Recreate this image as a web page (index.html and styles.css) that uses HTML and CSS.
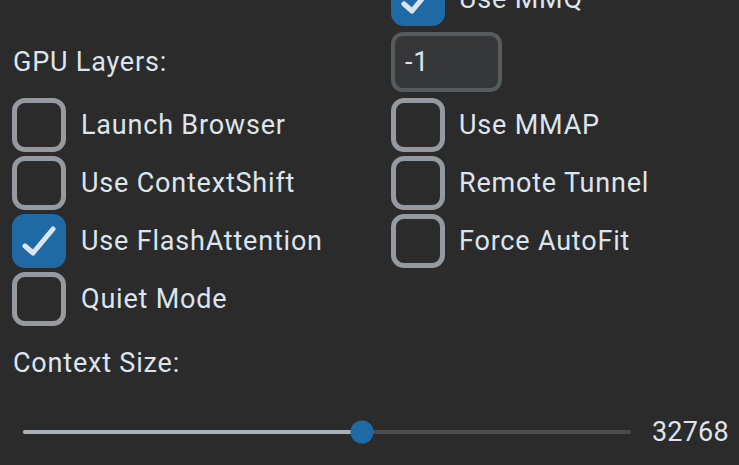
FILE: index.html
```html
<!DOCTYPE html>
<html lang="en">
<head>
    <meta charset="UTF-8">
    <meta name="viewport" content="width=device-width, initial-scale=1.0">
    <title>Hardware Settings</title>
    <link rel="stylesheet" href="styles.css">
</head>
<body>
    <div class="panel">
        <div class="grid">
            <div></div>
            <label class="check">
                <span class="box on">
                    <svg viewBox="0 0 54 54"><path d="M13 32 L21 39 L41 15"/></svg>
                </span>
                <span>Use MMQ</span>
            </label>

            <div class="label">GPU Layers:</div>
            <div class="entry">-1</div>

            <label class="check"><span class="box"></span><span>Launch Browser</span></label>
            <label class="check"><span class="box"></span><span>Use MMAP</span></label>

            <label class="check"><span class="box"></span><span>Use ContextShift</span></label>
            <label class="check"><span class="box"></span><span>Remote Tunnel</span></label>

            <label class="check">
                <span class="box on">
                    <svg viewBox="0 0 54 54"><path d="M13 32 L21 39 L41 15"/></svg>
                </span>
                <span>Use FlashAttention</span>
            </label>
            <label class="check"><span class="box"></span><span>Force AutoFit</span></label>

            <label class="check"><span class="box"></span><span>Quiet Mode</span></label>
        </div>

        <div class="label ctx-label">Context Size:</div>
        <div class="slider-row">
            <div class="slider">
                <div class="fill" style="width: 55.8%"></div>
                <div class="thumb" style="left: 55.8%"></div>
            </div>
            <div class="value">32768</div>
        </div>
    </div>
</body>
</html>
```

FILE: styles.css
```css
body {
    margin: 0;
    background-color: #2b2b2b;
    color: #dce4ee;
    font-family: Roboto, "Noto Sans", sans-serif;
    font-size: 27px;
    letter-spacing: 0.8px;
    overflow: hidden;
}
.panel {
    margin-top: -28px;
    padding-left: 12px;
}
.grid {
    display: grid;
    grid-template-columns: 379px auto;
    row-gap: 4px;
    align-items: center;
}
.label {
    line-height: 30px;
    padding-left: 1px;
}
.check {
    display: flex;
    align-items: center;
    gap: 14px;
    height: 54px;
}
.grid > .check:nth-child(odd) {
    gap: 15px;
}
.box {
    width: 54px;
    height: 54px;
    box-sizing: border-box;
    border: 5px solid #949a9f;
    border-radius: 13px;
    flex-shrink: 0;
    display: flex;
}
.box.on {
    background-color: #1f6aa5;
    border-color: #1f6aa5;
}
.box svg {
    width: 54px;
    height: 54px;
    margin: -5px;
}
.box svg path {
    fill: none;
    stroke: #dce4ee;
    stroke-width: 5;
    stroke-linecap: round;
    stroke-linejoin: round;
}
.entry {
    width: 111px;
    height: 60px;
    margin: 2px 0;
    box-sizing: border-box;
    border: 4px solid #565b5e;
    border-radius: 12px;
    background-color: #343638;
    padding-left: 10px;
    display: flex;
    align-items: center;
}
.ctx-label {
    margin-top: 22px;
}
.slider-row {
    display: flex;
    align-items: center;
    margin-top: 39px;
    padding-left: 11px;
    gap: 21px;
}
.slider {
    position: relative;
    width: 608px;
    height: 4px;
    border-radius: 2px;
    background-color: #4a4d50;
}
.fill {
    height: 4px;
    border-radius: 2px;
    background-color: #aab0b5;
}
.thumb {
    position: absolute;
    top: 50%;
    width: 23px;
    height: 23px;
    border-radius: 50%;
    background-color: #1f6aa5;
    transform: translate(-50%, -50%);
}
.value {
    line-height: 30px;
    letter-spacing: 0.2px;
}
```
